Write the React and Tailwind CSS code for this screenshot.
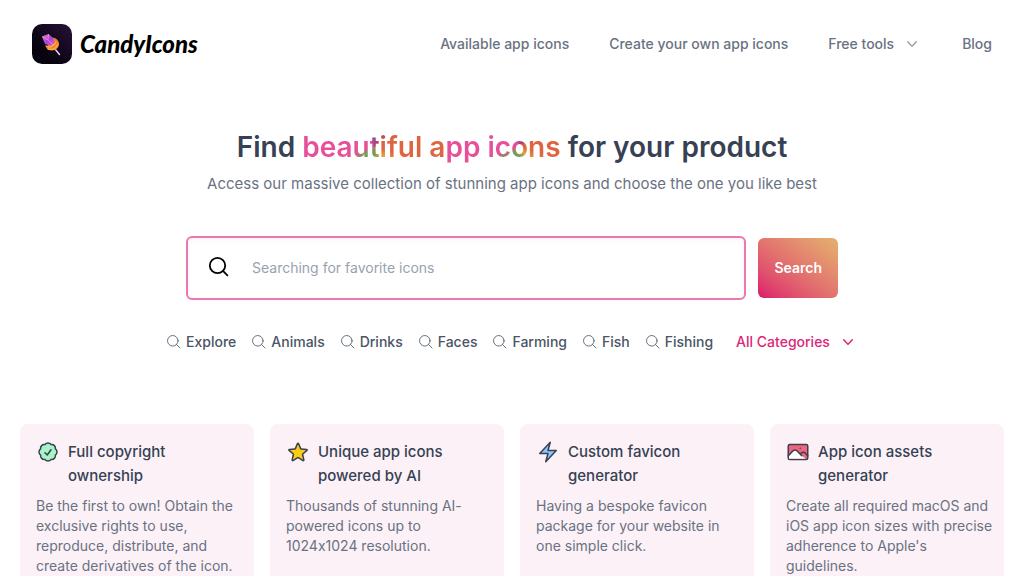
const navLink = "text-sm font-medium text-gray-500 hover:text-gray-900";

const categories = ["Explore", "Animals", "Drinks", "Faces", "Farming", "Fish", "Fishing"];

const features = [
  {
    title: "Full copyright ownership",
    text: "Be the first to own! Obtain the exclusive rights to use, reproduce, distribute, and create derivatives of the icon.",
    icon: BadgeIcon,
  },
  {
    title: "Unique app icons powered by AI",
    text: "Thousands of stunning AI-powered icons up to 1024x1024 resolution.",
    icon: StarIcon,
  },
  {
    title: "Custom favicon generator",
    text: "Having a bespoke favicon package for your website in one simple click.",
    icon: BoltIcon,
  },
  {
    title: "App icon assets generator",
    text: "Create all required macOS and iOS app icon sizes with precise adherence to Apple's guidelines.",
    icon: PhotoIcon,
  },
];

export default function App() {
  return (
    <div className="h-screen overflow-hidden bg-white font-['Inter',sans-serif] [font-feature-settings:'calt'_0]">
      <Header />
      <main>
        <Hero />
        <section className="grid grid-cols-4 items-start gap-4 px-5 pt-[72px]">
          {features.map((feature) => (
            <Feature key={feature.title} {...feature} />
          ))}
        </section>
      </main>
    </div>
  );
}

function Header() {
  return (
    <header className="flex items-center justify-between px-8 pt-6">
      <a href="#home" className="flex items-center gap-2">
        <Logo />
        <span className="font-['Lato',sans-serif] text-2xl leading-10 font-black text-black italic">CandyIcons</span>
      </a>
      <nav className="flex items-center gap-10">
        <a href="#icons" className={navLink}>Available app icons</a>
        <a href="#create" className={navLink}>Create your own app icons</a>
        <button type="button" className="flex items-center gap-2 text-sm font-medium text-gray-500">
          Free tools
          <ChevronIcon className="h-5 w-5 text-gray-400" />
        </button>
        <a href="#blog" className={navLink}>Blog</a>
      </nav>
    </header>
  );
}

function Hero() {
  return (
    <section className="flex flex-col items-center pt-16">
      <h1 className="text-[28px] leading-[38px] font-semibold text-gray-700">
        Find <GradientText>beautiful app icons</GradientText> for your product
      </h1>
      <p className="mt-[2px] text-[15px] leading-8 text-gray-500">
        Access our massive collection of stunning app icons and choose the one you like best
      </p>

      <form className="mt-9 flex w-full max-w-[652px] items-center gap-3" onSubmit={(e) => e.preventDefault()}>
        <label className="flex h-16 flex-1 items-center rounded-md border-2 border-[#ec78b2] bg-white pl-5 shadow-[inset_0_2px_6px_#fdf2f8]">
          <svg viewBox="0 0 24 24" fill="none" stroke="#000" strokeWidth={1.8} strokeLinecap="round" className="h-6 w-6">
            <circle cx="9.5" cy="9.5" r="7.7" />
            <path d="M15.2 15.2l4.2 4.2" />
          </svg>
          <input
            type="text"
            aria-label="Search icons"
            placeholder="Searching for favorite icons"
            className="ml-5 min-w-0 flex-1 text-sm text-gray-700 outline-none placeholder:text-gray-400"
          />
        </label>
        <button type="submit" className="h-[60px] rounded-md bg-linear-to-tr from-[#db0f6b] to-[#e2b26d] px-4 text-sm font-semibold text-white">
          Search
        </button>
      </form>

      <div className="mt-8 flex items-center gap-[15px]">
        {categories.map((name) => (
          <a key={name} href={`#${name}`} className="flex items-center gap-1 text-sm font-medium text-gray-600">
            <SearchIcon className="h-4 w-4" />
            {name}
          </a>
        ))}
        <button type="button" className="ml-2 flex items-center gap-2 text-sm font-medium text-[#db2777]">
          All Categories
          <ChevronIcon className="h-5 w-5" />
        </button>
      </div>
    </section>
  );
}

// The conic background repeats, so the colours swirl around "t" and again around "o"
function GradientText({ children }) {
  return (
    <span className="bg-[conic-gradient(#8a4a9e_0deg,#bf3f4f_30deg,#de6540_65deg,#de6540_105deg,#e8a23c_140deg,#6f9c55_185deg,#7d9a58_235deg,#e84f9a_255deg,#e84f9a_320deg,#8a4a9e_360deg)] bg-size-[145px_100%] bg-clip-text text-transparent">
      {children}
    </span>
  );
}

function Feature({ title, text, icon: Icon }) {
  return (
    <article className="min-h-44 rounded-lg bg-[#fbf1f7] py-4 pr-2 pl-4">
      <h2 className="flex gap-2 text-[15px] leading-6 font-medium text-gray-700">
        <Icon />
        <span className="max-w-36">{title}</span>
      </h2>
      <p className="mt-2 text-sm text-gray-500">{text}</p>
    </article>
  );
}

function Logo() {
  return (
    <svg viewBox="0 0 40 40" className="h-10 w-10">
      <defs>
        <linearGradient id="tile" x1="0" y1="1" x2="1" y2="0">
          <stop offset="0.3" stopColor="#07040f" />
          <stop offset="1" stopColor="#2a103a" />
        </linearGradient>
        <linearGradient id="candy" x1="0" y1="0" x2="1" y2="1">
          <stop offset="0" stopColor="#f58ab8" />
          <stop offset="0.5" stopColor="#a63fe0" />
          <stop offset="1" stopColor="#ee62c4" />
        </linearGradient>
      </defs>
      <rect width="40" height="40" rx="10" fill="url(#tile)" />
      <path d="M23 25l4.500 5.500" stroke="#e8c9f4" strokeWidth="1.5" strokeLinecap="round" />
      <path d="M19 14c4-1 8 2 8 6 0 3-2 5-4 6-4 1-8 0-9-3l3-3z" fill="#ef7d2b" />
      <path d="M10 12.5l6.5-2.5 4.5 4 2 5-4 3-6-2z" fill="url(#candy)" />
      <path d="M16.5 10l-.5 6 5 5M10 12.5l6 3.500" stroke="#f7a6dc" strokeWidth="0.6" fill="none" />
      <path d="M14 22c3 2 8 1 10-4M16 25c4 1 8 0 10-5" stroke="#fbb540" strokeWidth="1.3" strokeLinecap="round" fill="none" />
    </svg>
  );
}

function SearchIcon({ className }) {
  return (
    <svg viewBox="0 0 24 24" fill="none" stroke="currentColor" strokeWidth={1.25} strokeLinecap="round" strokeLinejoin="round" className={className}>
      <path d="M21 21l-5.2-5.2" />
      <circle cx="10.2" cy="10.2" r="7.9" />
    </svg>
  );
}

function ChevronIcon({ className }) {
  return (
    <svg viewBox="0 0 20 20" fill="currentColor" className={className}>
      <path fillRule="evenodd" clipRule="evenodd" d="M5.23 7.21a.75.75 0 011.06.02L10 11.168l3.71-3.938a.75.75 0 111.08 1.04l-4.25 4.5a.75.75 0 01-1.08 0l-4.25-4.5a.75.75 0 01.02-1.06z" />
    </svg>
  );
}

function FeatureIcon({ children, fill }) {
  return (
    <svg viewBox="0 0 24 24" fill={fill} stroke="#374151" strokeWidth={1.5} strokeLinecap="round" strokeLinejoin="round" className="h-6 w-6 shrink-0">
      {children}
    </svg>
  );
}

function BadgeIcon() {
  return (
    <FeatureIcon fill="#a7f3c5">
      <path d="M21 12c0 1.268-.63 2.39-1.593 3.068a3.745 3.745 0 01-1.043 3.296 3.745 3.745 0 01-3.296 1.043A3.745 3.745 0 0112 21c-1.268 0-2.39-.63-3.068-1.593a3.746 3.746 0 01-3.296-1.043 3.745 3.745 0 01-1.043-3.296A3.745 3.745 0 013 12c0-1.268.63-2.39 1.593-3.068a3.745 3.745 0 011.043-3.296 3.746 3.746 0 013.296-1.043A3.746 3.746 0 0112 3c1.268 0 2.39.63 3.068 1.593a3.746 3.746 0 013.296 1.043 3.746 3.746 0 011.043 3.296A3.745 3.745 0 0121 12z" />
      <path fill="none" d="M9 12.75L11.25 15 15 9.75" />
    </FeatureIcon>
  );
}

function StarIcon() {
  return (
    <FeatureIcon fill="#facc15">
      <path d="M11.48 3.499a.562.562 0 011.04 0l2.125 5.111a.563.563 0 00.475.345l5.518.442c.499.04.701.663.321.988l-4.204 3.602a.563.563 0 00-.182.557l1.285 5.385a.562.562 0 01-.84.61l-4.725-2.885a.563.563 0 00-.586 0L6.982 20.54a.562.562 0 01-.84-.61l1.285-5.386a.562.562 0 00-.182-.557l-4.204-3.602a.563.563 0 01.321-.988l5.518-.442a.563.563 0 00.475-.345L11.48 3.5z" />
    </FeatureIcon>
  );
}

function BoltIcon() {
  return (
    <FeatureIcon fill="#93c5fd">
      <path d="M3.75 13.5l10.5-11.25L12 10.5h8.25L9.75 21.75 12 13.5H3.75z" />
    </FeatureIcon>
  );
}

function PhotoIcon() {
  return (
    <FeatureIcon fill="#f0647c">
      <path d="M3.75 19.5h16.5a1.5 1.5 0 001.5-1.5V6a1.5 1.5 0 00-1.5-1.5H3.75A1.5 1.5 0 002.25 6v12a1.5 1.5 0 001.5 1.5z" />
      <path fill="#fff" stroke="none" d="M3 15.75l4.409-5.159a2.25 2.25 0 013.182 0l4 3.9 5 4.259H3z" />
      <path fill="none" d="M2.25 15.75l5.159-5.159a2.25 2.25 0 013.182 0l5.159 5.159m-1.5-1.5l1.409-1.409a2.25 2.25 0 013.182 0l2.909 2.909" />
      <path fill="none" d="M14.25 8.25h.008" />
    </FeatureIcon>
  );
}
